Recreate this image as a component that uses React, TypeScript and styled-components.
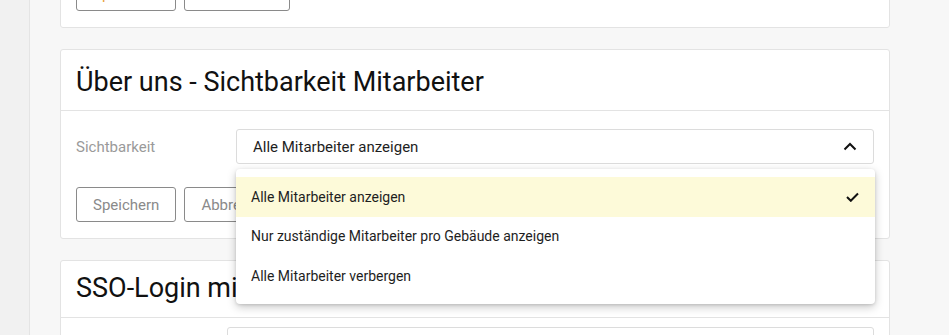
import React from "react";
import styled, { createGlobalStyle } from "styled-components";

const GlobalStyle = createGlobalStyle`
    html, body {
        margin: 0;
        padding: 0;
        background: #f7f7f7;
        font-family: Roboto, "Liberation Sans", Arial, sans-serif;
        overflow: hidden;
    }
`;

const Layout = styled.div`
    display: flex;
    height: 335px;
`;

const Sidebar = styled.div`
    width: 29px;
    flex-shrink: 0;
    background: #f1f1f1;
    border-right: 1px solid #e4e4e4;
`;

const Content = styled.div`
    width: 830px;
    padding: 0 30px;
    display: flex;
    flex-direction: column;
    gap: 21px;
`;

// karte oben ist herausgescrollt, nur unterkante sichtbar
const Clip = styled.div`
    height: 28px;
    overflow: hidden;
    display: flex;
    flex-direction: column;
    justify-content: flex-end;
    flex-shrink: 0;
`;

const Card = styled.div`
    background: #fff;
    border: 1px solid #e3e3e3;
    border-radius: 3px;
    flex-shrink: 0;
`;

const Title = styled.h2<{ $h: number; $pt: number }>`
    margin: 0;
    height: ${(p) => p.$h}px;
    box-sizing: border-box;
    padding: ${(p) => p.$pt}px 15px 0;
    font-size: 27px;
    font-weight: 400;
    color: #111;
    border-bottom: 1px solid #e3e3e3;
    white-space: nowrap;
`;

const Body = styled.div<{ $pt: number }>`
    padding: ${(p) => p.$pt}px 15px 16px;
`;

const Row = styled.div<{ $label: number }>`
    display: grid;
    grid-template-columns: ${(p) => p.$label}px 1fr;
    align-items: center;
`;

const Label = styled.span`
    font-size: 15px;
    color: #9a9a9a;
`;

const SelectWrap = styled.div`
    position: relative;
`;

const SelectBox = styled.div`
    height: 35px;
    box-sizing: border-box;
    border: 1px solid #dcdcdc;
    border-radius: 3px;
    display: flex;
    align-items: center;
    justify-content: space-between;
    padding: 0 16px;
    font-size: 15px;
    color: #1e1e1e;
`;

const Menu = styled.ul`
    position: absolute;
    top: 40px;
    left: 0;
    right: -1px;
    margin: 0;
    padding: 8px 0;
    list-style: none;
    background: #fff;
    border-radius: 4px;
    box-shadow: 0 3px 10px rgba(0, 0, 0, 0.22), 0 1px 3px rgba(0, 0, 0, 0.12);
    z-index: 10;
`;

const Item = styled.li<{ $active?: boolean }>`
    height: 39.5px;
    display: flex;
    align-items: center;
    justify-content: space-between;
    padding: 0 16px 0 15px;
    font-size: 14px;
    color: #1e1e1e;
    background: ${(p) => (p.$active ? "#fdfad9" : "transparent")};
`;

const Buttons = styled.div`
    display: flex;
    gap: 8px;
    margin-top: 23px;
`;

const Button = styled.button<{ $primary?: boolean }>`
    height: 35px;
    padding: 0 16px;
    background: #fff;
    border: 1px solid #8a8a8a;
    border-radius: 3px;
    font-family: inherit;
    font-size: 15px;
    color: ${(p) => (p.$primary ? "#e8a03c" : "#8a8a8a")};
`;

const Input = styled.div`
    height: 35px;
    border: 1px solid #dcdcdc;
    border-radius: 3px;
`;

const ChevronUp = () => (
    <svg width="14" height="9" viewBox="0 0 14 9" fill="none">
        <path d="M1.5 7.5L7 2l5.5 5.5" stroke="#111" strokeWidth="2" />
    </svg>
);

const Check = () => (
    <svg width="13" height="10" viewBox="0 0 13 10" fill="none">
        <path d="M1 5l3.8 3.8L12 1.5" stroke="#111" strokeWidth="2" />
    </svg>
);

const options = [
    "Alle Mitarbeiter anzeigen",
    "Nur zuständige Mitarbeiter pro Gebäude anzeigen",
    "Alle Mitarbeiter verbergen",
];

export default function App() {
    return (
        <>
            <GlobalStyle />
            <Layout>
                <Sidebar />
                <Content>
                    <Clip>
                        <Card>
                            <Title $h={61} $pt={16}>Einstellungen</Title>
                            <Body $pt={18}>
                                <Buttons>
                                    <Button $primary>Speichern</Button>
                                    <Button>Abbrechen</Button>
                                </Buttons>
                            </Body>
                        </Card>
                    </Clip>

                    <Card>
                        <Title $h={61} $pt={16}>Über uns - Sichtbarkeit Mitarbeiter</Title>
                        <Body $pt={18}>
                            <Row $label={160}>
                                <Label>Sichtbarkeit</Label>
                                <SelectWrap>
                                    <SelectBox>
                                        <span>Alle Mitarbeiter anzeigen</span>
                                        <ChevronUp />
                                    </SelectBox>
                                    <Menu>
                                        {options.map((o, i) => (
                                            <Item key={o} $active={i === 0}>
                                                <span>{o}</span>
                                                {i === 0 && <Check />}
                                            </Item>
                                        ))}
                                    </Menu>
                                </SelectWrap>
                            </Row>
                            <Buttons>
                                <Button>Speichern</Button>
                                <Button>Abbrechen</Button>
                            </Buttons>
                        </Body>
                    </Card>

                    <Card>
                        <Title $h={57} $pt={11}>SSO-Login mit Microsoft</Title>
                        <Body $pt={9}>
                            <Row $label={151}>
                                <Label>Aktiv</Label>
                                <Input />
                            </Row>
                        </Body>
                    </Card>
                </Content>
            </Layout>
        </>
    );
}
